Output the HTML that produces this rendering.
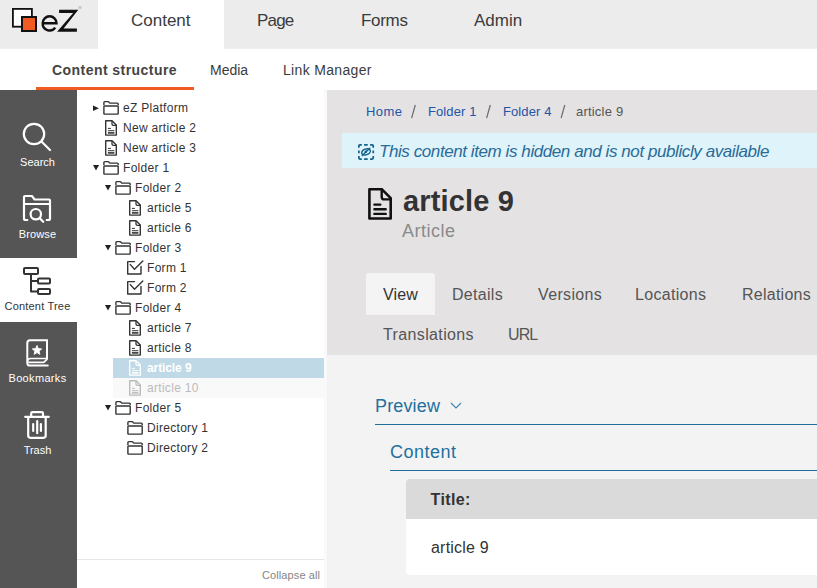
<!DOCTYPE html>
<html><head><meta charset="utf-8">
<style>
*{margin:0;padding:0;box-sizing:border-box}
html,body{width:817px;height:588px;overflow:hidden;background:#fff;font-family:"Liberation Sans",sans-serif;color:#333}
.a{position:absolute;white-space:nowrap}
#hdr{position:absolute;left:0;top:0;width:817px;height:49px;background:#ececec;border-bottom:1px solid #efefef}
#hdr .tab{position:absolute;top:0;height:49px}
.ht{font-size:17px;color:#3b3b3b;line-height:20px;top:11px}
#sub{position:absolute;left:0;top:49px;width:817px;height:41px;background:#fff}
.st{font-size:14px;color:#3b3b3b;line-height:16px;top:62px}
#side{position:absolute;left:0;top:90px;width:77px;height:498px;background:#555}
.sl{font-size:11px;color:#fff;line-height:13px;text-align:center;width:75px;left:0}
#tree{position:absolute;left:77px;top:90px;width:247px;height:498px;background:#fff}
#strip{position:absolute;left:324px;top:90px;width:3px;height:498px;background:#f9f9f9}
.tr{position:absolute;height:20px;line-height:20px;font-size:12px;color:#333;white-space:nowrap;letter-spacing:0.3px}
.tr svg{position:absolute}
#main{position:absolute;left:327px;top:90px;width:490px;height:265px;background:#e4e2e3}
#low{position:absolute;left:327px;top:355px;width:490px;height:233px;background:#f3f3f3}
.bc{font-size:13px;line-height:16px;top:104px;color:#2454a6}
.sep{color:#666}
.tb{font-size:16px;line-height:20px;color:#555}
</style></head><body>
<div id="hdr">
  <div class="tab" style="left:98px;width:126px;background:#fff"></div>
  <!-- logo -->
  <svg class="a" style="left:0;top:0" width="98" height="49" viewBox="0 0 98 49">
    <rect x="12.9" y="8.9" width="19" height="17.8" fill="#fff" stroke="#111" stroke-width="1.8"/>
    <rect x="22" y="17" width="14" height="14" fill="#f15a22" stroke="#111" stroke-width="2"/>
    <path d="M42.7 23.2 H56.5 A6.9 6.9 0 0 0 42.7 23.2 A6.9 6.9 0 0 0 55.2 27.6" fill="none" stroke="#111" stroke-width="2.4"/>
    <path d="M59.1 9.8 H78.3 L63.6 28.6 H76.9 V31.7 H57.1 L73.2 12.9 H59.1 Z" fill="#111"/>
    <circle cx="80" cy="7.5" r="1.6" fill="#c4c4c4"/>
  </svg>
</div>
<div class="a ht" style="left:131px">Content</div>
<div class="a ht" style="left:257px;letter-spacing:-0.8px">Page</div>
<div class="a ht" style="left:361px;letter-spacing:-0.3px">Forms</div>
<div class="a ht" style="left:474px">Admin</div>

<div id="sub"></div>
<div class="a st" style="left:52px;font-weight:bold;letter-spacing:0.45px;color:#444">Content structure</div>
<div class="a st" style="left:210px">Media</div>
<div class="a st" style="left:283px;letter-spacing:0.33px">Link Manager</div>
<div class="a" style="left:36px;top:87px;width:158px;height:3px;background:#f15a22"></div>

<div id="side"></div>
<div class="a" style="left:0;top:258px;width:77px;height:64px;background:#fff"></div>
<!-- search -->
<svg class="a" style="left:0;top:90px" width="77" height="380" viewBox="0 90 77 380">
  <g fill="none" stroke="#fff" stroke-width="2.2" stroke-linecap="round">
    <circle cx="34" cy="134" r="10.2"/>
    <line x1="41.5" y1="141.5" x2="50" y2="150"/>
    <!-- browse -->
    <path d="M24 203.5 V197 Q24 196 25 196 H32 L34.5 199.5 H49 Q50 199.5 50 200.5 V203.5"/>
    <line x1="24" y1="204" x2="50" y2="204"/>
    <path d="M24 205 V218.5 Q24 220 25.5 220 H27.3"/>
    <path d="M50 205 V218.5 Q50 220 48.5 220 H46.7"/>
    <circle cx="35.8" cy="214.2" r="5.2"/>
    <line x1="39.5" y1="218" x2="43.2" y2="221.8"/>
    <!-- bookmarks -->
    <path stroke-width="2" d="M47 358.5 V340.2 H30 Q27.3 340.2 27.3 342.9 V362.9 Q27.3 365.6 30 365.6 H47.8"/><path stroke-width="1.6" d="M27.5 361.6 Q27.8 358.5 30.5 358.5 H47"/><path stroke-width="1.7" d="M29 362.3 H43.8 L46.9 359.3"/>
    <!-- trash -->
    <path d="M25.2 416.8 H48.8 M31.2 416.8 V413.4 Q31.2 412.2 32.4 412.2 H41.8 Q43 412.2 43 413.4 V416.8 M28.2 416.8 V435.6 Q28.2 437.8 30.4 437.8 H43.5 Q45.7 437.8 45.7 435.6 V416.8"/>
    <line x1="37.2" y1="421.2" x2="37.2" y2="433.2"/>
    <line x1="33.2" y1="424" x2="33.2" y2="431"/>
    <line x1="40.9" y1="424" x2="40.9" y2="431"/>
  </g>
  <path d="M37.00 345.50 L38.29 348.62 L41.66 348.89 L39.09 351.08 L39.88 354.36 L37.00 352.60 L34.12 354.36 L34.91 351.08 L32.34 348.89 L35.71 348.62 Z" fill="#fff" stroke="#fff" stroke-width="0.9" stroke-linejoin="round"/>
  <!-- content tree -->
  <g fill="none" stroke="#333" stroke-width="2" stroke-linejoin="round">
    <rect x="24" y="268" width="14" height="6" rx="1"/>
    <rect x="38" y="278.5" width="12" height="5" rx="1"/>
    <rect x="38" y="289" width="12" height="5" rx="1"/>
    <path d="M31 274 V291.5 H38 M31 281 H38"/>
  </g>
</svg>
<div class="a sl" style="top:156px">Search</div>
<div class="a sl" style="top:228px;letter-spacing:0.12px">Browse</div>
<div class="a sl" style="top:300px;color:#333;letter-spacing:0.2px">Content Tree</div>
<div class="a sl" style="top:372px;letter-spacing:0.33px">Bookmarks</div>
<div class="a sl" style="top:444px">Trash</div>

<div id="tree"></div>
<div id="strip"></div>
<div class="a" style="left:113px;top:358px;width:211px;height:20px;background:#c0d9e6"></div>
<div class="a" style="left:113px;top:378px;width:211px;height:20px;background:#f9f9f9"></div>
<div class="a" style="left:77px;top:559px;width:247px;height:1px;background:#e6e6e6"></div>
<div class="a" style="left:262px;top:569px;font-size:11px;line-height:13px;color:#858585;letter-spacing:0.1px">Collapse all</div>

<svg width="0" height="0" style="position:absolute">
<defs>
<symbol id="ifolder" viewBox="0 0 16 20"><g fill="none" stroke="currentColor" stroke-width="1.4" stroke-linejoin="round"><path d="M0.9 7 V4.4 Q0.9 3.6 1.7 3.6 H5.2 Q5.6 3.6 5.9 4.1 Q6.5 5.1 7.1 5.1 H14.4 Q15.2 5.1 15.2 5.9 V7"/><rect x="0.9" y="8" width="14.3" height="8.1" rx="0.6"/></g></symbol>
<symbol id="idoc" viewBox="0 0 13 20"><g fill="none" stroke="currentColor" stroke-linejoin="round"><path stroke-width="1.4" d="M0.7 2.7 H7 L11.3 7 V17.1 H0.7 Z"/><path stroke-width="1.3" d="M7 2.7 V5.9 Q7 7.3 8.4 7.3 H11.3"/><path stroke-width="1" d="M2.9 10.4 H5.9 M2.9 12.7 H9.4"/><path stroke-width="1.6" d="M2.9 14.9 H9.4"/></g></symbol>
<symbol id="iform" viewBox="0 0 17 20"><g fill="none" stroke="currentColor" stroke-width="1.4" stroke-linejoin="round" stroke-linecap="round"><path d="M7.5 3.6 H0.7 V16 H14 V8.5"/><path d="M3.3 6.6 L7.5 11.2 L15.8 3"/></g></symbol>
</defs></svg>
<svg class="a" style="left:93px;top:98px" width="7" height="20"><path d="M-0.2 7.4 L5.9 10.2 L-0.2 13Z" fill="#222"/></svg>
<svg class="a" style="left:103px;top:98px" width="16" height="20"><use href="#ifolder" style="color:#333"/></svg>
<div class="tr" style="left:123px;top:98px;color:#333;">eZ Platform</div>
<svg class="a" style="left:105px;top:118px" width="13" height="20"><use href="#idoc" style="color:#333"/></svg>
<div class="tr" style="left:123px;top:118px;color:#333;">New article 2</div>
<svg class="a" style="left:105px;top:138px" width="13" height="20"><use href="#idoc" style="color:#333"/></svg>
<div class="tr" style="left:123px;top:138px;color:#333;">New article 3</div>
<svg class="a" style="left:93px;top:158px" width="7" height="20"><path d="M-0.1 6.9 H6.1 L3 12.6Z" fill="#222"/></svg>
<svg class="a" style="left:103px;top:158px" width="16" height="20"><use href="#ifolder" style="color:#333"/></svg>
<div class="tr" style="left:123px;top:158px;color:#333;">Folder 1</div>
<svg class="a" style="left:105px;top:178px" width="7" height="20"><path d="M-0.1 6.9 H6.1 L3 12.6Z" fill="#222"/></svg>
<svg class="a" style="left:115px;top:178px" width="16" height="20"><use href="#ifolder" style="color:#333"/></svg>
<div class="tr" style="left:135px;top:178px;color:#333;">Folder 2</div>
<svg class="a" style="left:129px;top:198px" width="13" height="20"><use href="#idoc" style="color:#333"/></svg>
<div class="tr" style="left:147px;top:198px;color:#333;">article 5</div>
<svg class="a" style="left:129px;top:218px" width="13" height="20"><use href="#idoc" style="color:#333"/></svg>
<div class="tr" style="left:147px;top:218px;color:#333;">article 6</div>
<svg class="a" style="left:105px;top:238px" width="7" height="20"><path d="M-0.1 6.9 H6.1 L3 12.6Z" fill="#222"/></svg>
<svg class="a" style="left:115px;top:238px" width="16" height="20"><use href="#ifolder" style="color:#333"/></svg>
<div class="tr" style="left:135px;top:238px;color:#333;">Folder 3</div>
<svg class="a" style="left:127px;top:258px" width="17" height="20"><use href="#iform" style="color:#333"/></svg>
<div class="tr" style="left:147px;top:258px;color:#333;">Form 1</div>
<svg class="a" style="left:127px;top:278px" width="17" height="20"><use href="#iform" style="color:#333"/></svg>
<div class="tr" style="left:147px;top:278px;color:#333;">Form 2</div>
<svg class="a" style="left:105px;top:298px" width="7" height="20"><path d="M-0.1 6.9 H6.1 L3 12.6Z" fill="#222"/></svg>
<svg class="a" style="left:115px;top:298px" width="16" height="20"><use href="#ifolder" style="color:#333"/></svg>
<div class="tr" style="left:135px;top:298px;color:#333;">Folder 4</div>
<svg class="a" style="left:129px;top:318px" width="13" height="20"><use href="#idoc" style="color:#333"/></svg>
<div class="tr" style="left:147px;top:318px;color:#333;">article 7</div>
<svg class="a" style="left:129px;top:338px" width="13" height="20"><use href="#idoc" style="color:#333"/></svg>
<div class="tr" style="left:147px;top:338px;color:#333;">article 8</div>
<svg class="a" style="left:129px;top:358px" width="13" height="20"><use href="#idoc" style="color:#fff"/></svg>
<div class="tr" style="left:147px;top:358px;color:#fff;font-weight:bold;letter-spacing:-0.1px">article 9</div>
<svg class="a" style="left:129px;top:378px" width="13" height="20"><use href="#idoc" style="color:#bbb"/></svg>
<div class="tr" style="left:147px;top:378px;color:#bbb;">article 10</div>
<svg class="a" style="left:105px;top:398px" width="7" height="20"><path d="M-0.1 6.9 H6.1 L3 12.6Z" fill="#222"/></svg>
<svg class="a" style="left:115px;top:398px" width="16" height="20"><use href="#ifolder" style="color:#333"/></svg>
<div class="tr" style="left:135px;top:398px;color:#333;">Folder 5</div>
<svg class="a" style="left:127px;top:418px" width="16" height="20"><use href="#ifolder" style="color:#333"/></svg>
<div class="tr" style="left:147px;top:418px;color:#333;">Directory 1</div>
<svg class="a" style="left:127px;top:438px" width="16" height="20"><use href="#ifolder" style="color:#333"/></svg>
<div class="tr" style="left:147px;top:438px;color:#333;">Directory 2</div>
<div id="main"></div>
<div id="low"></div>
<div class="a bc" style="left:366px;letter-spacing:0.45px">Home</div>
<div class="a bc" style="left:428px;letter-spacing:0.1px">Folder 1</div>
<div class="a bc" style="left:503px;letter-spacing:0.1px">Folder 4</div>
<div class="a bc" style="left:576px;color:#555;letter-spacing:0.2px">article 9</div>
<svg class="a" style="left:400px;top:100px" width="180" height="22"><g stroke="#6a6a6a" stroke-width="1.2"><path d="M415.3 105 L411.6 118.2" transform="translate(-400,-100)"/><path d="M490.3 105 L486.6 118.2" transform="translate(-400,-100)"/><path d="M564.8 105 L561.1 118.2" transform="translate(-400,-100)"/></g></svg>

<div class="a" style="left:342px;top:133px;width:475px;height:35px;background:#dff3fb"></div>
<svg class="a" style="left:356px;top:142px" width="20" height="20" viewBox="0 0 20 20">
  <g fill="none" stroke="#10608a" stroke-width="1.7" stroke-linecap="butt">
    <path d="M2.85 5.8 V4.1 Q2.85 2.85 4.1 2.85 H5.8 M8.1 2.85 H11.7 M14.1 2.85 H16 Q17.25 2.85 17.25 4.1 V5.8 M17.25 8.6 V11.2 M17.25 14.1 V15.8 Q17.25 17.05 16 17.05 H14.1 M11.7 17.05 H8.1 M5.8 17.05 H4.1 Q2.85 17.05 2.85 15.8 V14.1 M2.85 11.2 V8.6"/>
    <ellipse cx="10" cy="9.9" rx="4.5" ry="2.9" transform="rotate(-18 10 9.9)" stroke-width="1.4"/>
    <path d="M6.3 13.5 L13.8 6.3" stroke-width="1.4" stroke-linecap="round"/>
  </g>
  <circle cx="9.8" cy="9.8" r="1.3" fill="#10608a"/>
</svg>
<div class="a" style="left:379px;top:141.5px;font-size:17px;line-height:20px;font-style:italic;color:#2a6b96;letter-spacing:-0.42px">This content item is hidden and is not publicly available</div>

<svg class="a" style="left:366px;top:186px" width="28" height="36" viewBox="0 0 28 36">
  <g fill="none" stroke="#111" stroke-linejoin="round" stroke-linecap="round">
    <path stroke-width="2.6" d="M3.4 3.2 H15.7 L24.7 12.2 V32.5 H3.4 Z"/>
    <path stroke-width="2.4" d="M15.7 3.2 V11 Q15.7 13.4 18.1 13.4 H24.7"/>
    <path stroke-width="2.4" d="M8.4 18.6 H14.3 M8.4 23.3 H19.7 M8.4 27.9 H19.7"/>
  </g>
</svg>
<div class="a" style="left:403px;top:185px;font-size:29px;line-height:32px;font-weight:bold;color:#333;letter-spacing:0.15px">article 9</div>
<div class="a" style="left:402px;top:220px;font-size:18px;line-height:22px;color:#8a8a8a;letter-spacing:0.5px">Article</div>

<div class="a" style="left:366px;top:273px;width:69px;height:42px;background:#f4f4f4;border-radius:3px 3px 0 0"></div>
<div class="a tb" style="left:383px;top:285px;color:#333;letter-spacing:0.1px">View</div>
<div class="a tb" style="left:452px;top:285px;letter-spacing:0.3px">Details</div>
<div class="a tb" style="left:538px;top:285px;letter-spacing:0.35px">Versions</div>
<div class="a tb" style="left:635px;top:285px;letter-spacing:0.3px">Locations</div>
<div class="a tb" style="left:742px;top:285px;letter-spacing:0.25px">Relations</div>
<div class="a tb" style="left:383px;top:325px;letter-spacing:0.37px">Translations</div>
<div class="a tb" style="left:508px;top:325px;letter-spacing:-0.9px">URL</div>

<div class="a" style="left:375px;top:395px;font-size:18px;line-height:22px;color:#2170a0;letter-spacing:0.15px">Preview</div>
<svg class="a" style="left:449px;top:400px" width="14" height="12"><path d="M2 3 L7 8 L12 3" fill="none" stroke="#3f82ad" stroke-width="1.1"/></svg>
<div class="a" style="left:375px;top:424px;width:442px;height:1px;background:#1f6e9c"></div>
<div class="a" style="left:390px;top:441px;font-size:18px;line-height:22px;color:#2170a0;letter-spacing:0.5px">Content</div>
<div class="a" style="left:390px;top:470px;width:427px;height:1px;background:#1f6e9c"></div>

<div class="a" style="left:406px;top:479px;width:420px;height:96px;background:#fff;border-radius:4px;overflow:hidden">
  <div style="height:40px;background:#dadada"></div>
</div>
<div class="a" style="left:430.5px;top:490px;font-size:16px;line-height:20px;font-weight:bold;color:#333;letter-spacing:0.4px">Title:</div>
<div class="a" style="left:431px;top:538px;font-size:16px;line-height:20px;color:#333;letter-spacing:0.2px">article 9</div>

</body></html>
